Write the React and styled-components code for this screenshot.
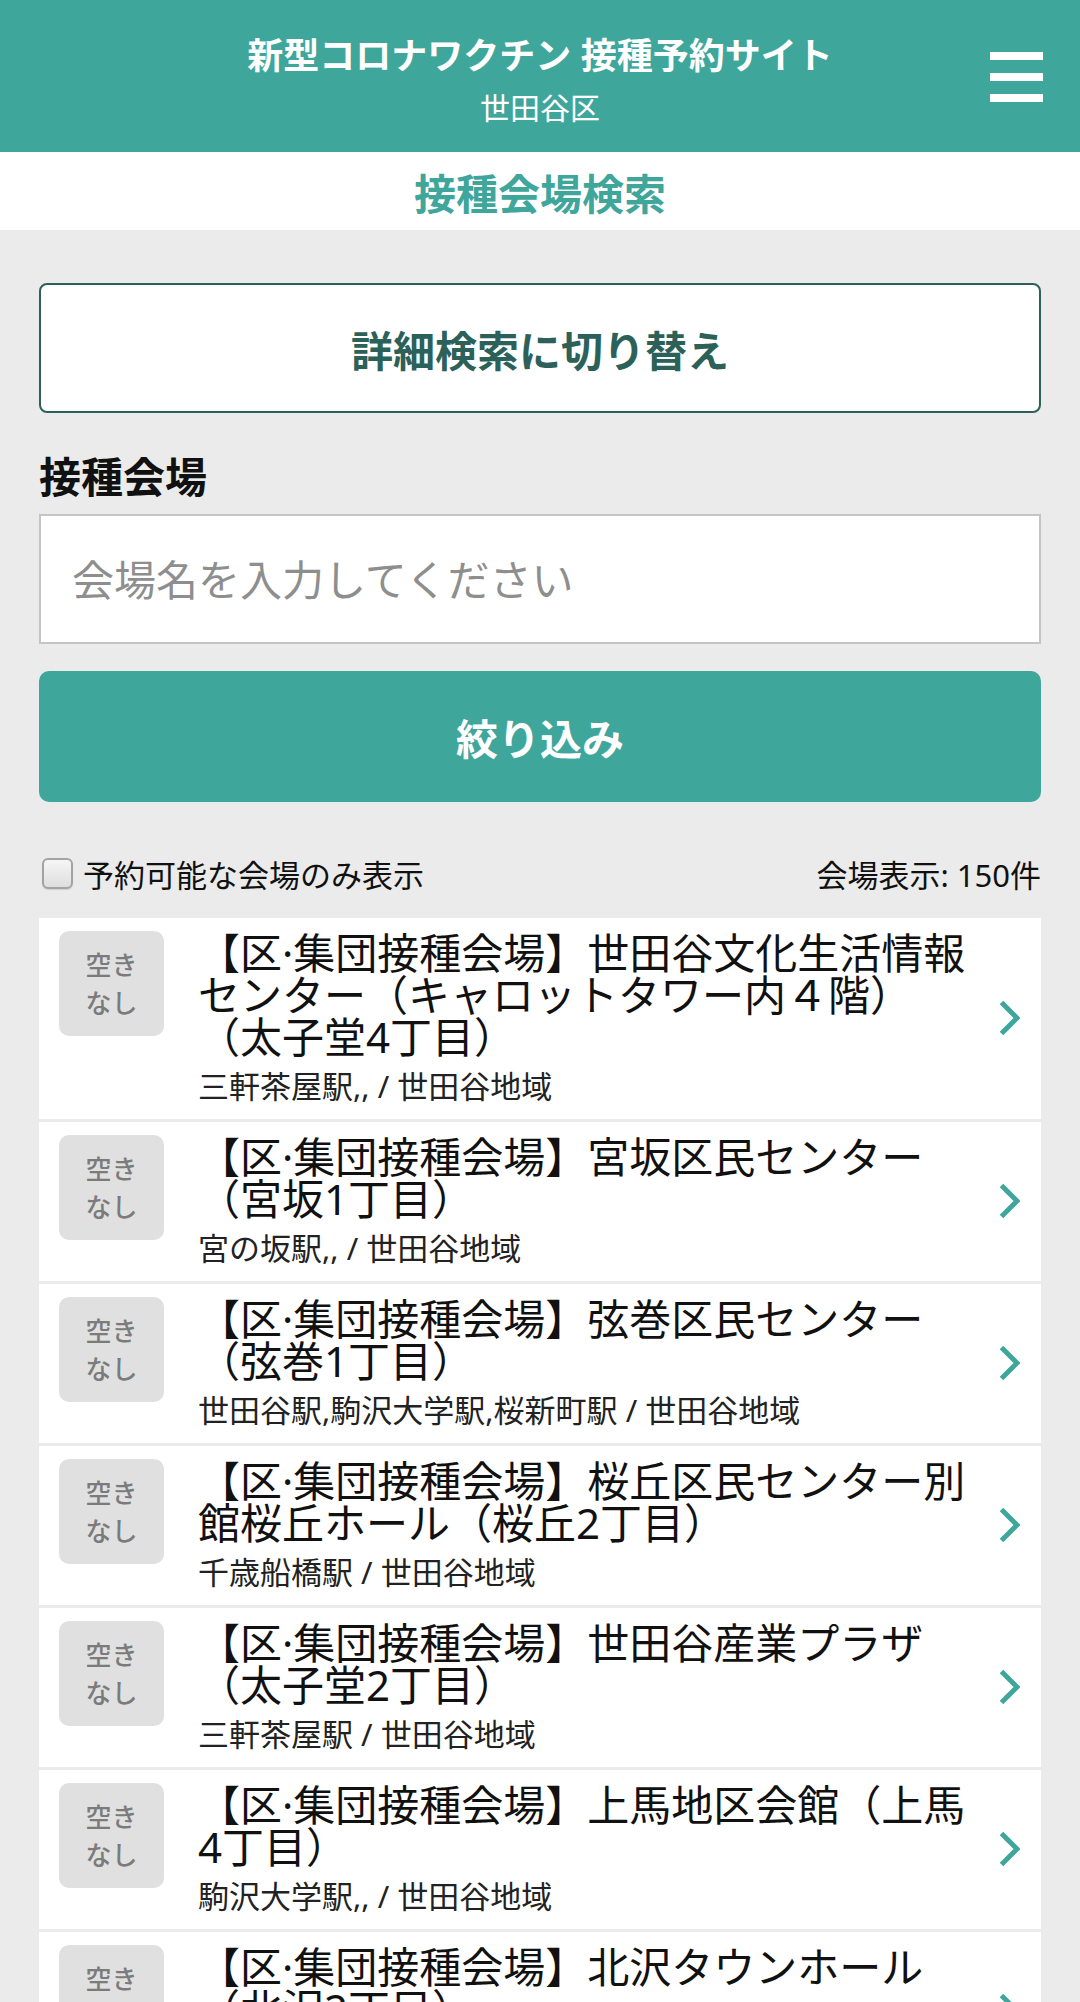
import React from "react";
import styled, { createGlobalStyle } from "styled-components";

const TEAL = "#3fa69b";
const DARK_TEAL = "#2c6159";
const PAGE_BG = "#ebebeb";
const FONT = `"Noto Sans", "Noto Sans CJK JP", sans-serif`;

const GlobalStyle = createGlobalStyle`
  * { box-sizing: border-box; }
  html, body {
    margin: 0;
    padding: 0;
    background: ${PAGE_BG};
    font-family: ${FONT};
    color: #111;
    text-spacing-trim: space-all;
  }
`;

const Header = styled.header`
  position: relative;
  height: 152px;
  background: ${TEAL};
  color: #fff;
  display: flex;
  flex-direction: column;
  align-items: center;
  padding-top: 34px;
`;

const SiteTitle = styled.h1`
  margin: 0;
  font-size: 36px;
  font-weight: 700;
  line-height: 44px;
`;

const Ward = styled.div`
  margin-top: 8px;
  font-size: 30px;
  line-height: 44px;
`;

const MenuButton = styled.button`
  position: absolute;
  right: 37px;
  top: 52px;
  width: 53px;
  height: 50px;
  padding: 0;
  border: 0;
  background: none;
  display: flex;
  flex-direction: column;
  justify-content: space-between;
`;

const MenuBar = styled.span`
  display: block;
  height: 8px;
  background: #fff;
`;

const PageTitle = styled.h2`
  margin: 0;
  height: 78px;
  background: #fff;
  display: flex;
  align-items: center;
  justify-content: center;
  font-size: 42px;
  font-weight: 700;
  color: ${TEAL};
`;

const Main = styled.main`
  padding: 53px 39px 0;
`;

const SwitchButton = styled.button`
  display: flex;
  width: 100%;
  height: 130px;
  align-items: center;
  justify-content: center;
  background: #fff;
  border: 2px solid ${DARK_TEAL};
  border-radius: 8px;
  font-family: ${FONT};
  font-size: 42px;
  font-weight: 700;
  color: ${DARK_TEAL};
`;

const FieldLabel = styled.label`
  display: block;
  margin-top: 39px;
  font-size: 42px;
  font-weight: 700;
  line-height: 50px;
  color: #111;
`;

const TextInput = styled.input`
  display: block;
  margin-top: 12px;
  width: 100%;
  height: 130px;
  border: 2px solid #c4c4c4;
  border-radius: 0;
  background: #fff;
  padding: 0 31px;
  font-family: ${FONT};
  font-size: 42px;
  color: #111;
  outline: none;
  &::placeholder {
    color: #8e8e8e;
  }
`;

const FilterButton = styled.button`
  display: flex;
  margin-top: 27px;
  width: 100%;
  height: 131px;
  align-items: center;
  justify-content: center;
  border: 0;
  border-radius: 10px;
  background: ${TEAL};
  color: #fff;
  font-family: ${FONT};
  font-size: 42px;
  font-weight: 700;
`;

const OptionsRow = styled.div`
  margin-top: 46px;
  height: 50px;
  display: flex;
  align-items: center;
  justify-content: space-between;
  font-size: 31px;
  color: #111;
`;

const CheckLabel = styled.label`
  display: flex;
  align-items: center;
  gap: 10px;
  margin-left: 3px;
`;

const Checkbox = styled.input`
  appearance: none;
  -webkit-appearance: none;
  margin: 0;
  width: 31px;
  height: 31px;
  border: 2px solid #a3a3a3;
  border-radius: 6px;
  background: linear-gradient(#f6f6f6, #dedede);
  box-shadow: 0 1px 1px rgba(0, 0, 0, 0.12);
`;

const Count = styled.span`
  white-space: nowrap;
`;

const List = styled.ul`
  margin: 20px 0 0;
  padding: 0;
  list-style: none;
  display: flex;
  flex-direction: column;
  gap: 3px;
`;

const Item = styled.li`
  display: flex;
  align-items: flex-start;
  background: #fff;
  padding: 13px 21px 15px 20px;
`;

const Badge = styled.div`
  flex: none;
  width: 105px;
  height: 105px;
  border-radius: 10px;
  background: #e0e0e0;
  color: #7b7b7b;
  font-size: 26px;
  font-weight: 500;
  line-height: 38px;
  display: flex;
  align-items: center;
  justify-content: center;
  text-align: center;
  margin-right: 34px;
`;

const Body = styled.div`
  flex: 1;
  min-width: 0;
`;

const VenueName = styled.div`
  padding-top: 1px;
  font-size: 42px;
  line-height: 42px;
  color: #111;
`;

const Access = styled.div`
  margin-top: 10px;
  font-size: 31px;
  line-height: 36px;
  color: #222;
`;

const Chevron = styled.svg`
  flex: none;
  align-self: center;
  margin-left: 22px;
  width: 21px;
  height: 36px;
`;

const venues = [
  {
    name: "【区·集団接種会場】世田谷文化生活情報センター（キャロットタワー内４階）（太子堂4丁目）",
    access: "三軒茶屋駅,, / 世田谷地域",
  },
  { name: "【区·集団接種会場】宮坂区民センター（宮坂1丁目）", access: "宮の坂駅,, / 世田谷地域" },
  {
    name: "【区·集団接種会場】弦巻区民センター（弦巻1丁目）",
    access: "世田谷駅,駒沢大学駅,桜新町駅 / 世田谷地域",
  },
  {
    name: "【区·集団接種会場】桜丘区民センター別館桜丘ホール（桜丘2丁目）",
    access: "千歳船橋駅 / 世田谷地域",
  },
  { name: "【区·集団接種会場】世田谷産業プラザ（太子堂2丁目）", access: "三軒茶屋駅 / 世田谷地域" },
  { name: "【区·集団接種会場】上馬地区会館（上馬4丁目）", access: "駒沢大学駅,, / 世田谷地域" },
  { name: "【区·集団接種会場】北沢タウンホール（北沢2丁目）", access: "下北沢駅,, / 北沢地域" },
];

function ChevronIcon() {
  return (
    <Chevron viewBox="0 0 21 36" aria-hidden="true">
      <polyline points="2.5,2.5 18,18 2.5,33.5" fill="none" stroke={TEAL} strokeWidth="5" />
    </Chevron>
  );
}

export default function App() {
  return (
    <>
      <GlobalStyle />
      <Header>
        <SiteTitle>新型コロナワクチン 接種予約サイト</SiteTitle>
        <Ward>世田谷区</Ward>
        <MenuButton aria-label="メニュー">
          <MenuBar />
          <MenuBar />
          <MenuBar />
        </MenuButton>
      </Header>
      <PageTitle>接種会場検索</PageTitle>
      <Main>
        <SwitchButton>詳細検索に切り替え</SwitchButton>
        <FieldLabel htmlFor="venue">接種会場</FieldLabel>
        <TextInput id="venue" placeholder="会場名を入力してください" />
        <FilterButton>絞り込み</FilterButton>
        <OptionsRow>
          <CheckLabel>
            <Checkbox type="checkbox" />
            予約可能な会場のみ表示
          </CheckLabel>
          <Count>会場表示: 150件</Count>
        </OptionsRow>
        <List>
          {venues.map((v) => (
            <Item key={v.name}>
              <Badge>
                空き
                <br />
                なし
              </Badge>
              <Body>
                <VenueName>{v.name}</VenueName>
                <Access>{v.access}</Access>
              </Body>
              <ChevronIcon />
            </Item>
          ))}
        </List>
      </Main>
    </>
  );
}
